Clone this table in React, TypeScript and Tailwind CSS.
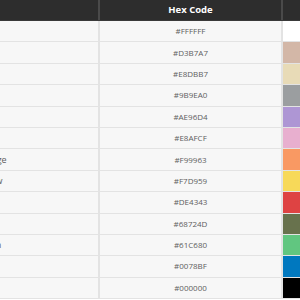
import React from "react";

const rows: [string, string][] = [
  ["White", "#FFFFFF"],
  ["Beige", "#D3B7A7"],
  ["Sand", "#E8DBB7"],
  ["Grey", "#9B9EA0"],
  ["Lilac", "#AE96D4"],
  ["Pink", "#E8AFCF"],
  ["Orange", "#F99963"],
  ["Yellow", "#F7D959"],
  ["Red", "#DE4343"],
  ["Olive", "#68724D"],
  ["Green", "#61C680"],
  ["Blue", "#0078BF"],
  ["Black", "#000000"],
];

export default function App() {
  return (
    <div
      className="w-[300px] h-[300px] overflow-hidden bg-white"
      style={{ fontFamily: '"Open Sans", "Liberation Sans", sans-serif' }}
    >
      <div className="flex flex-col w-[340px] -ml-[40px]">
        <div className="flex h-[21px] bg-[#2d2d2d] border-b border-[#3a3a3a] text-white font-bold text-[9.5px]">
          <div className="w-[138px] shrink-0" />
          <div className="w-[183px] shrink-0 border-l-2 border-[#4a4a4a] flex items-center justify-center">
            Hex Code
          </div>
          <div className="flex-1 border-l-2 border-[#4a4a4a]" />
        </div>
        {rows.map(([name, hex]) => (
          <div
            key={hex}
            className="flex h-[21.4px] bg-[#f7f7f7] border-b border-[#e3e3e3] text-[8px] text-[#5e5e5e]"
          >
            <div className="w-[138px] shrink-0 flex items-center pl-[15.5px] text-[9px]">
              {name}
            </div>
            <div className="w-[183px] shrink-0 border-l-2 border-[#e3e3e3] flex items-center justify-center">
              {hex}
            </div>
            <div
              className="flex-1 border-l-2 border-[#e3e3e3]"
              style={{ backgroundColor: hex }}
            />
          </div>
        ))}
      </div>
    </div>
  );
}
